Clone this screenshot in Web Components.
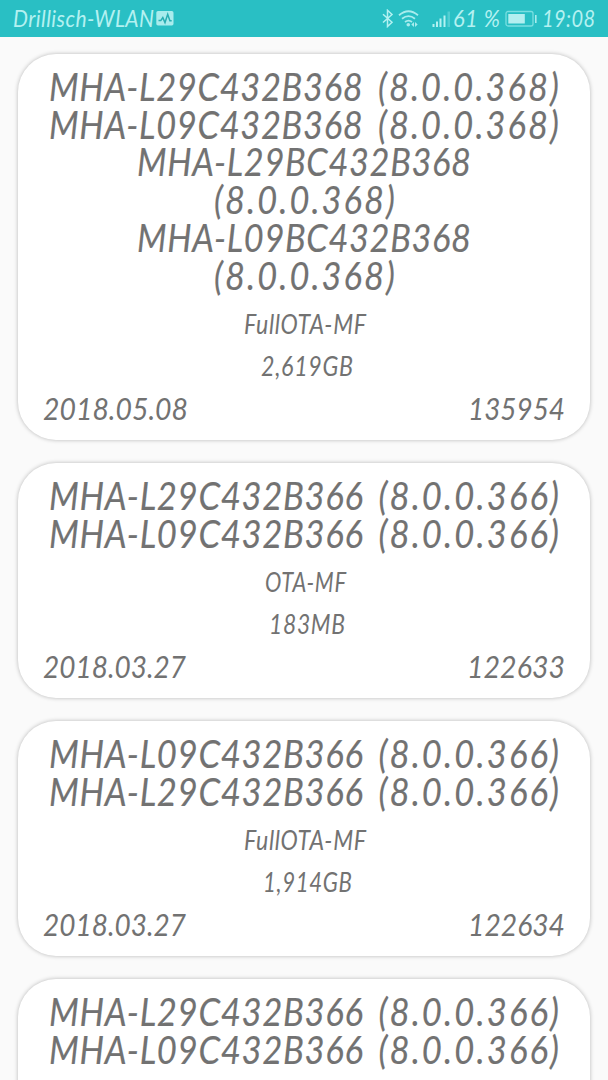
<!DOCTYPE html>
<html lang="de">
<head>
<meta charset="utf-8">
<title>Firmware</title>
<style>
body{margin:0;background:#fafafa;height:1080px;overflow:hidden;font-family:Lato,"Open Sans",sans-serif;font-style:italic;color:#727272}
</style>
</head>
<body>
<firmware-app></firmware-app>
<script>
/* A single line of text, condensed or widened to the width it is given.
   A version in parentheses is set a little wider than the rest. */
class FitText extends HTMLElement{
  connectedCallback(){
    const w=+this.getAttribute('w');
    const root=this.attachShadow({mode:'open'});
    root.innerHTML=`<style>:host{display:block;flex:none;width:${w}px;white-space:nowrap}span{display:inline-block;transform-origin:0 50%}i{font-style:inherit;letter-spacing:.061em}</style><span></span>`;
    const s=root.querySelector('span');
    s.innerHTML=this.getAttribute('text').replace(/\(.*\)/,'<i>$&</i>');
    const trailing=parseFloat(getComputedStyle(s.querySelector('i')||s).letterSpacing)||0;
    s.style.transform=`scaleX(${w/(s.getBoundingClientRect().width-trailing)})`;
  }
}
customElements.define('fit-text',FitText);

class StatusBar extends HTMLElement{
  connectedCallback(){
    this.attachShadow({mode:'open'}).innerHTML=`
<style>
:host{display:flex;box-sizing:border-box;height:37px;padding:0 13px;background:#29bfc4;color:#b4f1f1;font-size:23px;line-height:34px;align-items:center;letter-spacing:.02em}
svg{display:block;flex:none}
fit-text{margin-top:-2px}
.gap{flex:1}
</style>
<fit-text w="141" text="Drillisch-WLAN"></fit-text>
<svg style="margin-left:2px" width="18" height="15" viewBox="0 0 18 15"><rect x=".3" width="17.2" height="14.5" rx="1.7" fill="#a9eced"/><path d="M2.5 9.600h2.300l2-3 2.200 5 2.700-8.300 2.200 6.500h1.800" fill="none" stroke="#29aeb3" stroke-width="1.500"/></svg>
<div class="gap"></div>
<svg width="12" height="19" viewBox="0 0 12 19"><path d="M1 5.200l9 8-4.500 4.300V1.300L10 5.500l-9 8" fill="none" stroke="#b4f1f1" stroke-width="1.500"/></svg>
<svg style="margin-left:4px" width="22" height="19" viewBox="0 0 22 19"><g fill="none" stroke="#a9eced" stroke-width="1.800"><path d="M1 6.300q9.500-8 19 0M4 9.800q6.500-5.300 13 0M7 13q3.500-2.700 7 0"/></g><circle cx="10.300" cy="15.800" r="1.800" fill="#a9eced"/><path d="M13.300 15.500l2.700-2.500v5zM17 13l2.700 2.500-2.700 2.500z" fill="#a9eced"/></svg>
<svg style="margin-left:12px" width="19" height="18" viewBox="0 0 19 18"><g fill="#b4f1f1"><path d="M.5 14h2v3h-2zM4 11.500h2V17H4zM7.500 8.500h2V17h-2zM11.500 5.500h2V17h-2z"/><path d="M15.500 1.500h2.500V17h-2.500z" opacity=".3"/></g></svg>
<fit-text style="margin-left:2px" w="47" text="61 %"></fit-text>
<svg style="margin-left:5px" width="33" height="18" viewBox="0 0 33 18"><rect x="1" y="1.500" width="27" height="14.500" rx="2" fill="none" stroke="#79dfe1" stroke-width="1.300"/><rect x="3.300" y="4" width="16.500" height="9.500" fill="#b4eff0"/><path d="M30.800 5v8" stroke="#a9eced" stroke-width="1.600"/></svg>
<fit-text style="margin-left:4px" w="53" text="19:08"></fit-text>`;
  }
}
customElements.define('status-bar',StatusBar);

class FirmwareCard extends HTMLElement{
  connectedCallback(){
    this.attachShadow({mode:'open'}).innerHTML=`
<style>
:host{display:block;box-sizing:border-box;padding:13px 25px 0;background:#fff;border-radius:38px;box-shadow:0 0 4px rgba(0,0,0,.27)}
.titles,.info{display:flex;flex-direction:column;align-items:center}
.titles{font-size:39.500px;line-height:37.700px;letter-spacing:.02em;word-spacing:.17em;-webkit-text-stroke:.15px #727272}
.info{margin-top:10.500px;font-size:26.300px;line-height:41.800px;letter-spacing:.03em}
.foot{display:flex;justify-content:space-between;margin-top:2.500px;font-size:31.500px;line-height:37px}
</style>
<div class="titles"><slot name="title"></slot></div>
<div class="info"><slot name="info"></slot></div>
<div class="foot"><slot name="foot"></slot></div>`;
  }
}
customElements.define('firmware-card',FirmwareCard);

const line=(slot,[text,w,pad=0])=>`<fit-text slot="${slot}" style="padding-left:${pad}px" w="${w}" text="${text}"></fit-text>`;
const card=(h,titles,info,foot)=>`<firmware-card style="height:${h}px">${titles.map(t=>line('title',t)).join('')}${info.map(t=>line('info',t)).join('')}${foot.map(t=>line('foot',t)).join('')}</firmware-card>`;
class FirmwareApp extends HTMLElement{
  connectedCallback(){
    const a=['MHA-L29C432B366 (8.0.0.366)',510],b=['MHA-L09C432B366 (8.0.0.366)',510];
    this.attachShadow({mode:'open'}).innerHTML=`
<style>
:host{display:block;height:1080px;overflow:hidden}
main{display:flex;flex-direction:column;gap:23.500px;padding:17px 18px 0}
firmware-card{flex:none}
</style>
<status-bar></status-bar>
<main>
${card(385.500,[['MHA-L29C432B368 (8.0.0.368)',510],['MHA-L09C432B368 (8.0.0.368)',510],['MHA-L29BC432B368',334],['(8.0.0.368)',181],['MHA-L09BC432B368',334],['(8.0.0.368)',181]],[['FullOTA-MF',122,1],['2,619GB',92,6]],[['2018.05.08',145],['135954',97]])}
${card(234.700,[a,b],[['OTA-MF',81,2],['183MB',76,6]],[['2018.03.27',143],['122633',98]])}
${card(234.700,[b,a],[['FullOTA-MF',122,1],['1,914GB',89,7]],[['2018.03.27',143],['122634',97]])}
${card(234.700,[a,b],[],[])}
</main>`;
  }
}
customElements.define('firmware-app',FirmwareApp);
</script>
</body>
</html>
